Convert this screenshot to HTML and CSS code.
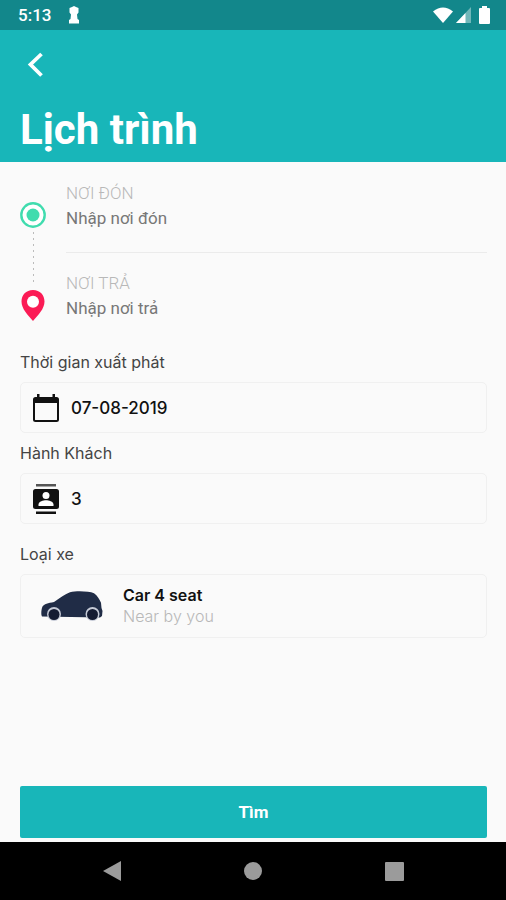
FILE: index.html
```html
<!DOCTYPE html>
<html lang="vi">
<head>
<meta charset="utf-8">
<meta name="viewport" content="width=device-width, initial-scale=1">
<title>Lịch trình</title>
<link rel="stylesheet" href="styles.css">
</head>
<body>
<div class="app">
  <div class="status">
    <span class="status-left">
      <time>5:13</time>
      <svg width="12" height="18" viewBox="0 0 12 18" fill="#fff" aria-hidden="true"><path d="M4 1 6 0l2 1 2.500 1v4.500L9 8.500l.500 4.500 1.500 1v3.500H1V14l1.500-1L3 8.500 1.500 6.500V2z"/></svg>
    </span>
    <span class="status-right">
      <svg width="20" height="16" viewBox="0 0 20 16" fill="#fff" aria-hidden="true"><path d="M0 4.500Q10-3.500 20 4.500L10 16z"/></svg>
      <svg width="15" height="16" viewBox="0 0 15 16" fill="#fff" aria-hidden="true"><path opacity=".4" d="M15 0v16H0z"/><path d="M9.500 6v10H0z"/></svg>
      <svg class="battery" width="11" height="18" viewBox="0 0 11 18" fill="#fff" aria-hidden="true"><path d="M3 0h5v2h2q1 0 1 1v14q0 1-1 1H1q-1 0-1-1V3q0-1 1-1h2z"/></svg>
    </span>
  </div>
  <header class="header">
    <button class="back" type="button" aria-label="Quay lại">
      <svg width="16" height="26" viewBox="0 0 16 26" fill="none" stroke="#fff" stroke-width="3.800" aria-hidden="true"><path d="M14.500 2 3.500 12.500l11 11"/></svg>
    </button>
    <h1>Lịch trình</h1>
  </header>
  <form class="form">
    <div class="route">
      <div class="track" aria-hidden="true">
        <svg width="26" height="26" viewBox="0 0 26 26"><circle cx="13" cy="13" r="11.700" fill="#fff" stroke="#40dcae" stroke-width="2.400"/><circle cx="13" cy="13" r="6.500" fill="#40dcae"/></svg>
        <span class="dots"></span>
        <svg width="24" height="31" viewBox="0 0 24 31"><path fill="#fb1b55" fill-rule="evenodd" d="M12 0C5 0 .500 5 .500 11.500.500 19 7 25 12 31c5-6 11.500-12 11.500-19.500C23.500 5 19 0 12 0z"/><circle cx="12" cy="11.700" r="6" fill="#fff"/></svg>
      </div>
      <div class="stops">
        <div class="stop">
          <label for="from">NƠI ĐÓN</label>
          <input id="from" type="text" placeholder="Nhập nơi đón">
        </div>
        <div class="stop">
          <label for="to">NƠI TRẢ</label>
          <input id="to" type="text" placeholder="Nhập nơi trả">
        </div>
      </div>
    </div>
    <div class="field">
      <label for="date">Thời gian xuất phát</label>
      <div class="box">
        <svg width="26" height="28" viewBox="0 0 26 28" aria-hidden="true"><path fill="#111" fill-rule="evenodd" d="M4 0h2.500v3h13V0H22v3h1.500Q26 3 26 5.500v20q0 2.500-2.500 2.500h-21Q0 28 0 25.500v-20Q0 3 2.500 3H4zM2 9v16.500q0 .500.500.500h21q.500 0 .500-.500V9z"/></svg>
        <input id="date" type="text" value="07-08-2019">
      </div>
    </div>
    <div class="field">
      <label for="guests">Hành Khách</label>
      <div class="box">
        <svg width="26" height="30" viewBox="0 0 26 30" aria-hidden="true"><path fill="#555" d="M3 0h20v2.500H3z"/><path fill="#111" d="M3 27.500h20V30H3zM2.500 5h21Q26 5 26 7.500v15q0 2.500-2.500 2.500h-21Q0 25 0 22.500v-15Q0 5 2.500 5z"/><circle cx="13" cy="11.500" r="3.500" fill="#fff"/><path fill="#fff" d="M5.500 22v-1.500c0-3 5-4.300 7.500-4.300s7.500 1.300 7.500 4.300V22z"/></svg>
        <input id="guests" type="text" inputmode="numeric" value="3">
      </div>
    </div>
    <div class="field vehicle-field">
      <span class="label" id="vehicle-label">Loại xe</span>
      <button class="box vehicle" type="button" aria-describedby="vehicle-label">
        <svg width="62" height="30" viewBox="0 0 62 30" aria-hidden="true"><path fill="#202c46" d="M1 25.500C0 24 0 19 1.500 15.500 3 13 7 12 13 11 19 7 24 3 29 1.300c7-1.800 19-1 24 .900 3.500 2.500 5.500 6 7 9.500L60.500 17l1 3-.5 5-2 1.500z"/><circle cx="13" cy="23" r="7" fill="#c5cad6"/><circle cx="51.500" cy="23" r="7" fill="#c5cad6"/><circle cx="13" cy="23.500" r="5.500" fill="#151c32"/><circle cx="51.500" cy="23.500" r="5.500" fill="#151c32"/></svg>
        <span class="vehicle-text"><strong>Car 4 seat</strong><span>Near by you</span></span>
      </button>
    </div>
    <button class="submit" type="submit">Tìm</button>
  </form>
  <nav class="nav" aria-label="Hệ thống">
    <button type="button" aria-label="Trở về"><svg width="20" height="22" viewBox="0 0 20 22" fill="#9b9b9b"><path d="M20 1v20L2 11z"/></svg></button>
    <button type="button" aria-label="Trang chủ"><svg width="20" height="20" viewBox="0 0 20 20" fill="#9b9b9b"><circle cx="10" cy="10" r="9"/></svg></button>
    <button type="button" aria-label="Gần đây"><svg width="20" height="20" viewBox="0 0 20 20" fill="#9b9b9b"><rect y="1" width="19" height="19" rx="1"/></svg></button>
  </nav>
</div>
</body>
</html>
```
FILE: styles.css
```css
* {
  box-sizing: border-box;
}

body {
  margin: 0;
  background: #fafafa;
  color: #111;
  font-family: Inter, Roboto, sans-serif;
  font-size: 16px;
  line-height: 24px;
}

button,
input {
  padding: 0;
  border: 0;
  background: none;
  color: inherit;
  font: inherit;
}

svg {
  display: block;
  flex: none;
}

.app {
  display: flex;
  flex-direction: column;
  min-height: 100vh;
}

.status {
  display: flex;
  justify-content: space-between;
  align-items: center;
  height: 30px;
  padding: 0 16px 0 18px;
  background: #12878b;
  color: #fff;
  font-family: Roboto, sans-serif;
  font-size: 17px;
  font-weight: 500;
}

.status-left {
  display: flex;
  align-items: center;
  gap: 17px;
}

.status-right {
  display: flex;
  align-items: center;
  gap: 3px;
}

.battery {
  margin-left: 5px;
}

.header {
  padding: 21px 20px 7px;
  background: #18b6b9;
  color: #fff;
}

.back {
  display: flex;
  align-items: center;
  width: 32px;
  height: 28px;
  padding-left: 7px;
}

h1 {
  margin: 26px 0 0;
  font-family: Roboto, sans-serif;
  font-size: 42px;
  line-height: 50px;
  font-weight: 700;
}

.form {
  display: flex;
  flex: 1;
  flex-direction: column;
  padding: 19px 19px 4px 20px;
}

.route {
  display: flex;
  gap: 20px;
  margin-bottom: 29px;
}

.track {
  display: flex;
  flex-direction: column;
  align-items: center;
  width: 26px;
  padding-top: 21px;
}

.dots {
  flex: 1;
  width: 1px;
  margin: 4px 0;
  background: repeating-linear-gradient(#bbb 0 2px, transparent 2px 6px);
}

.stops {
  flex: 1;
}

.stop + .stop {
  margin-top: 21px;
  border-top: 1px solid #ebebeb;
  padding-top: 18px;
}

.stop label,
.stop input {
  display: block;
  width: 100%;
  height: 25px;
  font-family: Roboto, sans-serif;
  font-size: 17px;
  line-height: 25px;
}

.stop label {
  color: #b8b8b8;
  font-weight: 300;
}

.stop input::placeholder {
  color: #777;
  opacity: 1;
}

.field {
  margin-bottom: 8px;
}

.field > label,
.label {
  display: block;
  margin-bottom: 8px;
  color: #444;
}

.box {
  display: flex;
  align-items: center;
  gap: 12px;
  width: 100%;
  height: 51px;
  padding: 0 12px;
  border: 1px solid #f0f0f0;
  border-radius: 5px;
}

.box input {
  flex: 1;
  min-width: 0;
  font-size: 17px;
  font-weight: 500;
}

.vehicle-field {
  margin-top: 10px;
}

.vehicle {
  gap: 20px;
  height: 64px;
  padding: 0 20px;
  text-align: left;
}

.vehicle-text {
  display: flex;
  flex-direction: column;
  line-height: 21px;
}

.vehicle-text strong {
  font-weight: 600;
}

.vehicle-text span {
  color: #b8b8b8;
  font-weight: 300;
}

.submit {
  height: 52px;
  margin-top: auto;
  border-radius: 2px;
  background: #18b6b9;
  color: #fff;
  font-family: Roboto, sans-serif;
  font-size: 17px;
  font-weight: 700;
}

.nav {
  display: flex;
  justify-content: space-between;
  align-items: center;
  height: 58px;
  padding: 0 20%;
  background: #000;
}
```
